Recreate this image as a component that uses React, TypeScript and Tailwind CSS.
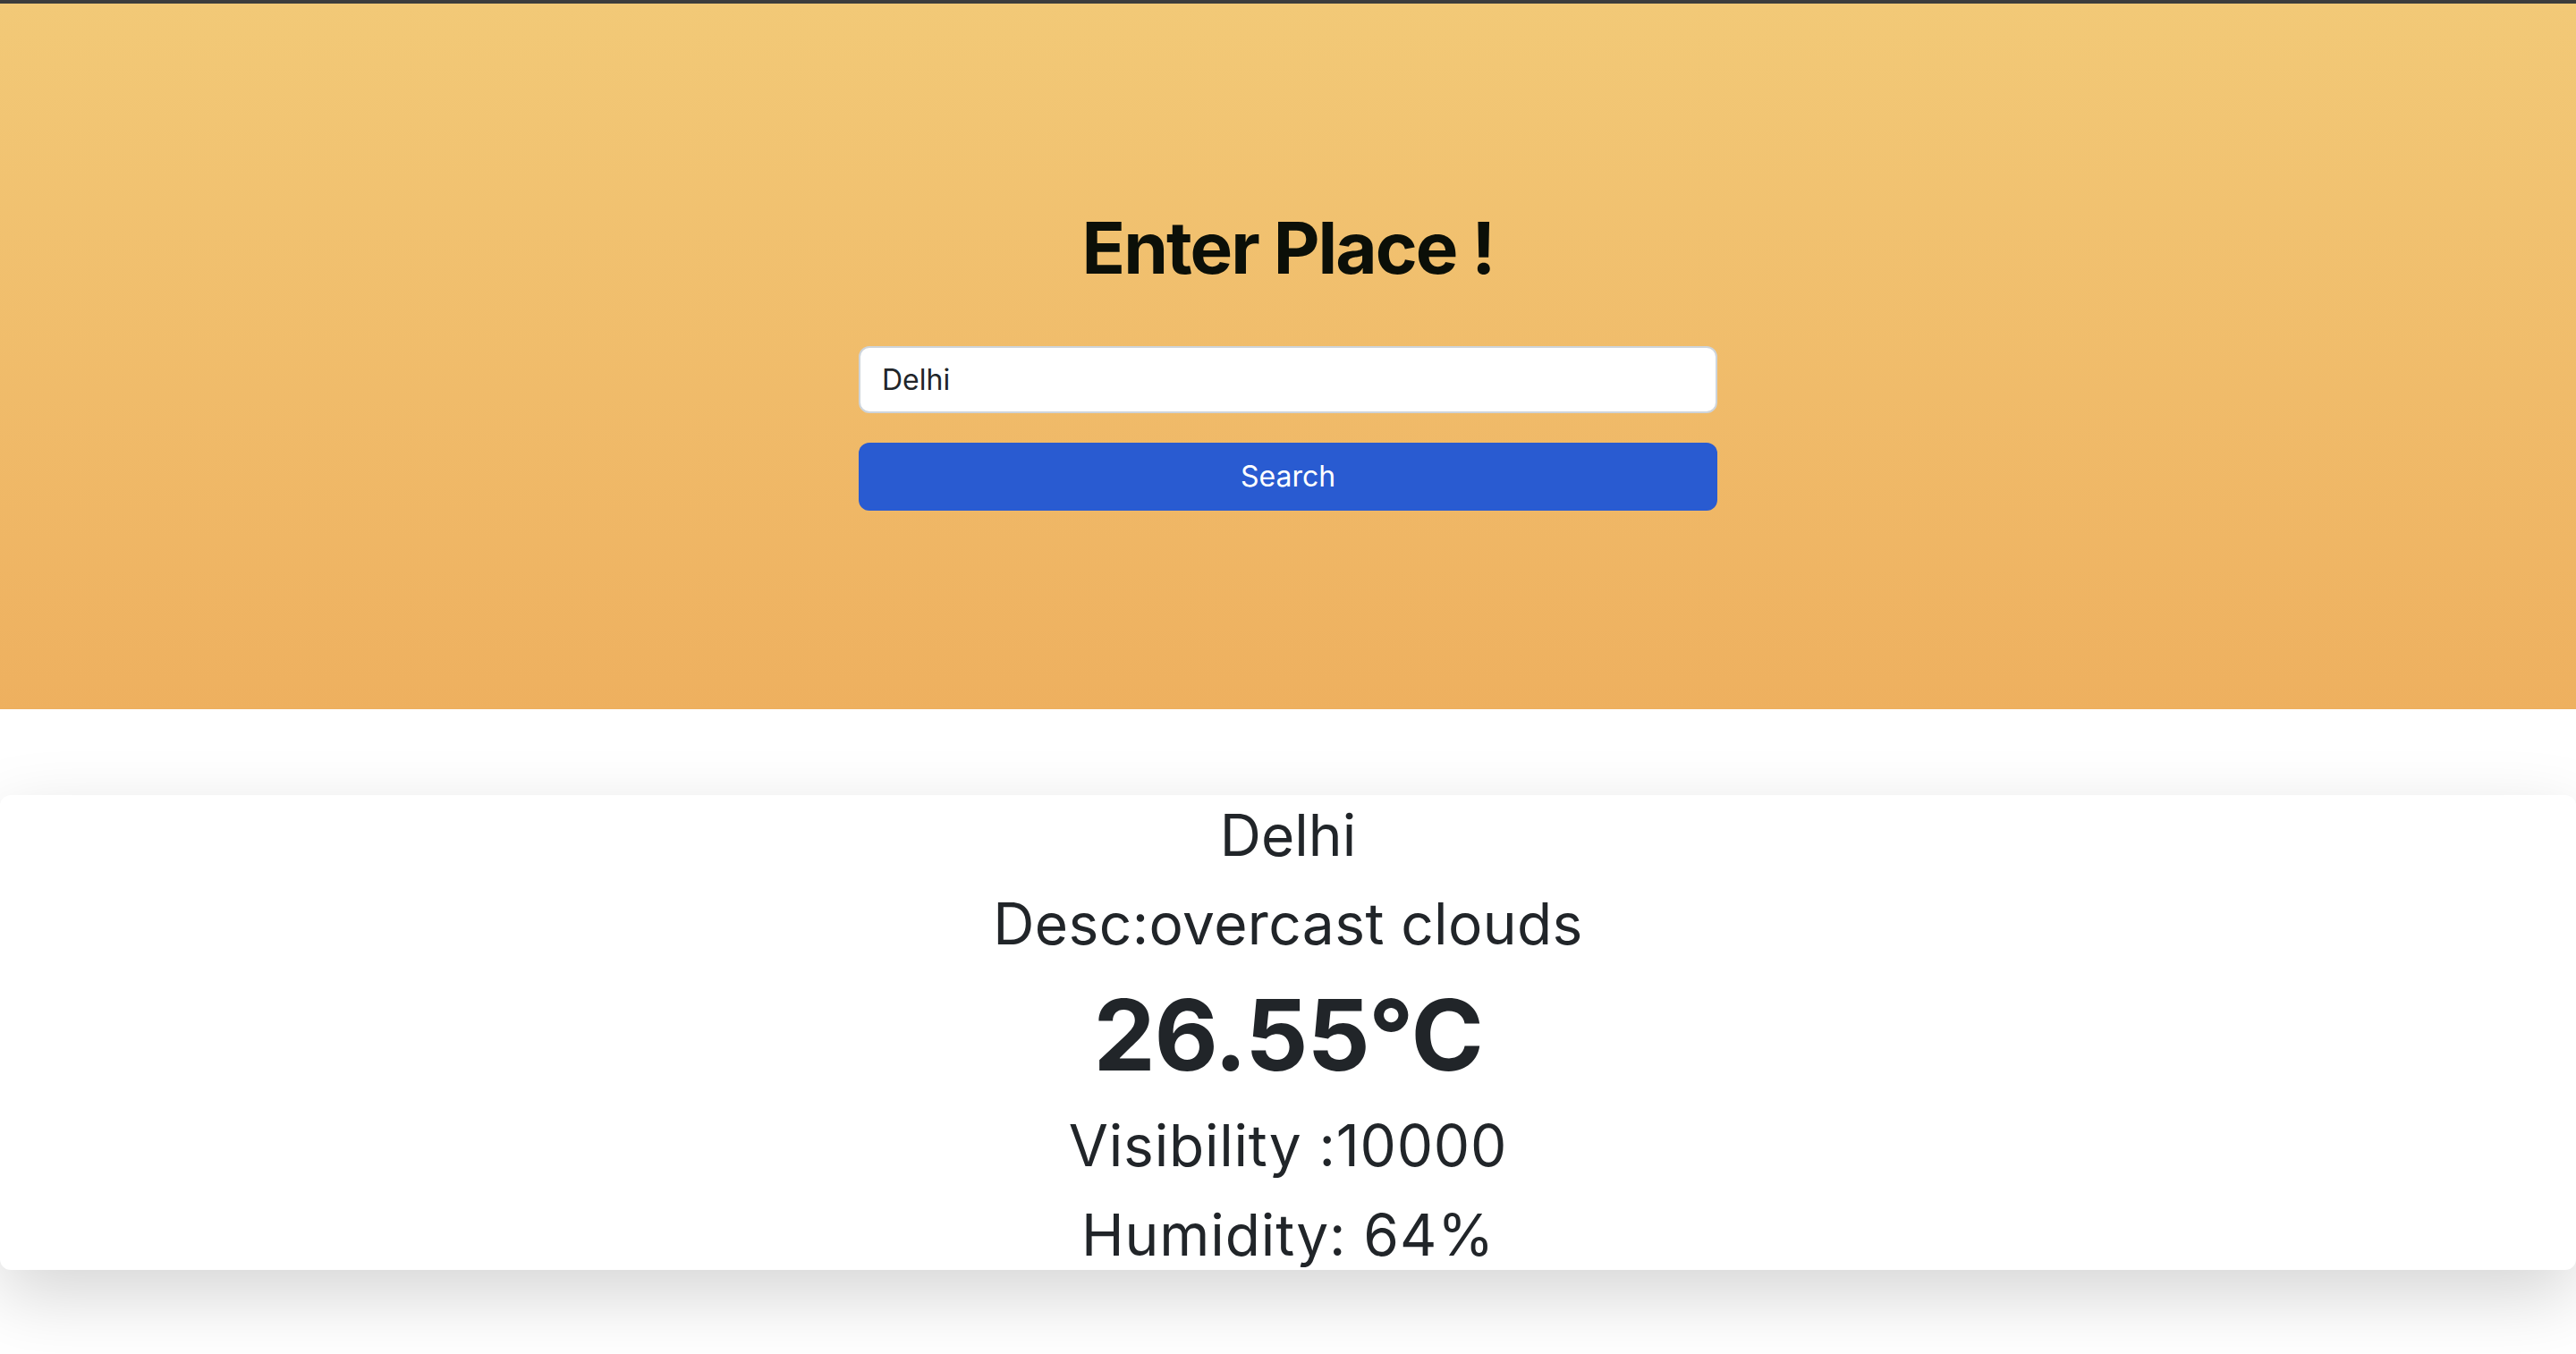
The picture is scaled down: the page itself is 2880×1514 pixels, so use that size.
import React, { useState } from 'react';

type Weather = {
  name: string;
  desc: string;
  temp: number;
  visibility: number;
  humidity: number;
};

const sample: Weather = {
  name: 'Delhi',
  desc: 'overcast clouds',
  temp: 26.55,
  visibility: 10000,
  humidity: 64,
};

export default function App() {
  const [place, setPlace] = useState('Delhi');
  const [weather] = useState<Weather>(sample);

  return (
    <div className="min-h-screen bg-white font-['Inter','Liberation_Sans',sans-serif] text-[#212529]">
      {/* top chrome line */}
      <div className="h-[4px] bg-[#3c3c3c]" />

      {/* search banner */}
      <section className="bg-gradient-to-b from-[#f2c977] to-[#eeb05f] pt-[225px] pb-[222px]">
        <div className="mx-auto w-[960px] flex flex-col">
          <h1 className="text-center text-[80px] leading-[96px] font-bold tracking-tight text-[#0b0f08]">
            Enter Place !
          </h1>
          <input
            value={place}
            onChange={(e) => setPlace(e.target.value)}
            className="mt-[62px] h-[75px] w-full rounded-[12px] border-2 border-[#ced4da] bg-white px-[24px] text-[32px] text-[#212529] outline-none"
          />
          <button className="mt-[33px] h-[76px] w-full rounded-[12px] bg-[#295bd1] text-[32px] text-white">
            Search
          </button>
        </div>
      </section>

      {/* result card */}
      <div className="mt-[96px] h-[531px] rounded-[12px] bg-white pt-[6px] text-center shadow-[0_28px_80px_rgba(0,0,0,0.17)]">
        <h2 className="text-[64px] leading-[77px]">{weather.name}</h2>
        <h2 className="mt-[22px] text-[64px] leading-[77px] tracking-[0.4px]">Desc:{weather.desc}</h2>
        <h1 className="mt-[20px] text-[110px] leading-[132px] font-bold tracking-[-1.2px]">{weather.temp}°C</h1>
        <h2 className="mt-[19px] text-[64px] leading-[77px] tracking-[0.8px]">Visibility :{weather.visibility}</h2>
        <h2 className="mt-[23px] text-[64px] leading-[77px] tracking-[0.9px]">Humidity: {weather.humidity}%</h2>
      </div>
    </div>
  );
}
